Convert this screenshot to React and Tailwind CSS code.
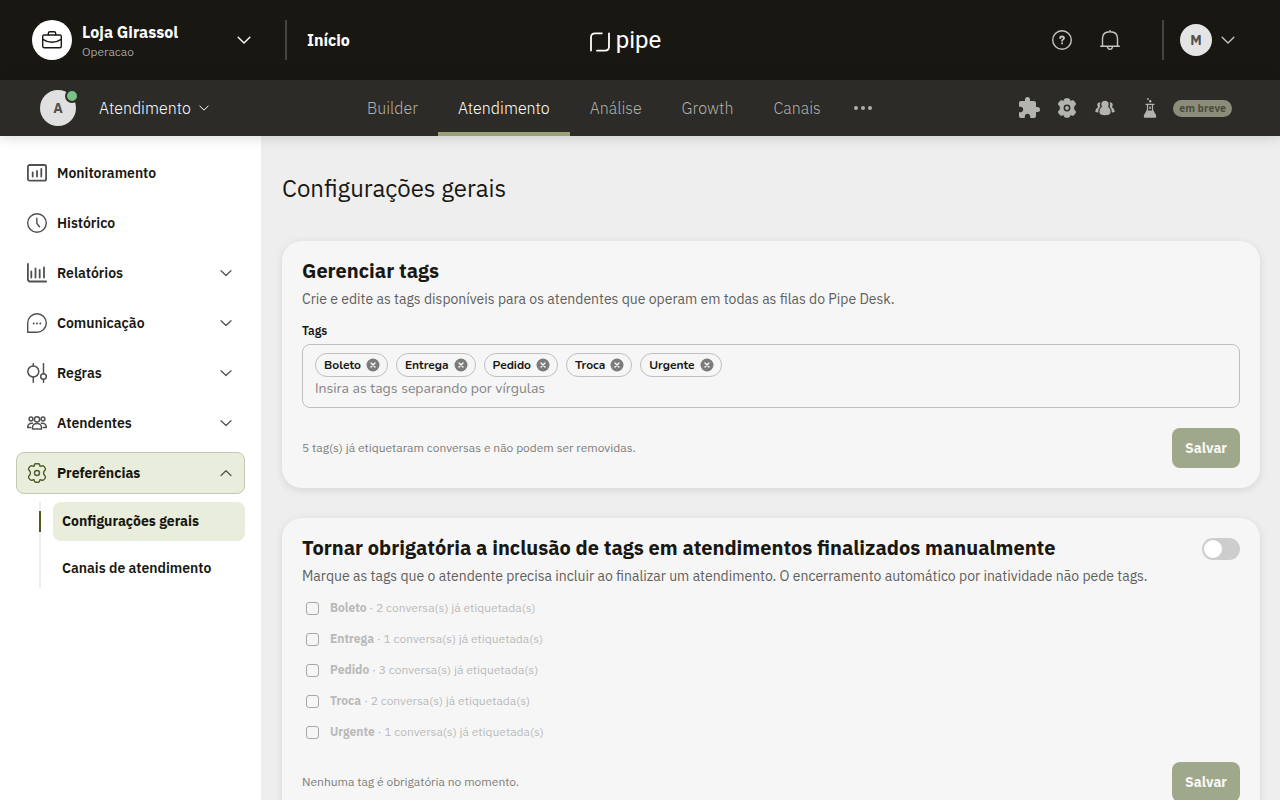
import { useState } from 'react'
import { MdExtension } from 'react-icons/md'

const TAGS = [
  { name: 'Boleto', used: 2 },
  { name: 'Entrega', used: 1 },
  { name: 'Pedido', used: 3 },
  { name: 'Troca', used: 2 },
  { name: 'Urgente', used: 1 },
]

const TABS = ['Builder', 'Atendimento', 'Análise', 'Growth', 'Canais']

const stroke = { fill: 'none', stroke: 'currentColor', strokeLinecap: 'round', strokeLinejoin: 'round' }

function Chevron({ className, up }) {
  return (
    <svg viewBox="0 0 12 12" className={className} {...stroke} strokeWidth="1.2" aria-hidden="true">
      <path d={up ? 'M1 8.5 6 3.7l5 4.8' : 'M1 3.7 6 8.5l5-4.8'} />
    </svg>
  )
}

function Icon({ children, className = 'size-5 shrink-0 text-[#505050]', width = 1.4 }) {
  return (
    <svg viewBox="0 0 20 20" className={className} {...stroke} strokeWidth={width} aria-hidden="true">
      {children}
    </svg>
  )
}

const GEAR =
  'M7.3 2.2Q7.3.8 8.6.8h2.8q1.3 0 1.3 1.4 0 1.3 1.2 1 1.3-.7 2.300-.4 1.200.5 2 2.200.8 1.600-.4 2.400-1.200.8-1.200 2.600t1.200 2.600q1.200.8.4 2.400-.8 1.700-2 2.200-1 .3-2.300-.4-1.200-.3-1.200 1 0 1.400-1.300 1.400H8.600q-1.300 0-1.300-1.400 0-1.300-1.200-1-1.300.7-2.300.4-1.200-.5-2-2.200-.8-1.600.4-2.400 1.200-.8 1.200-2.600T2.200 7.400Q1 6.600 1.800 5q.8-1.700 2-2.200 1-.3 2.300.4 1.200.3 1.200-1Z'

const MENU = [
  {
    label: 'Monitoramento',
    icon: (
      <Icon width={1.8}>
        <rect x=".9" y="2" width="18.200" height="15.700" rx="1.800" />
        <path d="M5.700 9.500v4M10 8v5.500M14.300 6v7.500" />
      </Icon>
    ),
  },
  {
    label: 'Histórico',
    icon: (
      <Icon>
        <circle cx="10" cy="10" r="9.300" />
        <path d="M9.800 5.200v5l2.700 3.500" />
      </Icon>
    ),
  },
  {
    label: 'Relatórios',
    group: true,
    icon: (
      <Icon width={1.8}>
        <path d="M.9.900v15.400q0 2.200 2.200 2.200h16M4.300 8.500v6M8.500 5.500v9M12.700 7v7.500M17 4.500v10" />
      </Icon>
    ),
  },
  {
    label: 'Comunicação',
    group: true,
    icon: (
      <Icon>
        <path d="M.7 19.300V10A9.300 9.300 0 1 1 10 19.300Z" />
        <path d="M6.700 10.500v.1M10 10.500v.1M13.300 10.500v.1" strokeWidth="2" />
      </Icon>
    ),
  },
  {
    label: 'Regras',
    group: true,
    icon: (
      <Icon width={1.5}>
        <circle cx="6.300" cy="8.500" r="5.500" />
        <circle cx="16.500" cy="13.500" r="2.800" />
        <path d="M6.300.7V3M6.300 14v5.300M16.500.7v10M16.500 16.500v2.800" />
      </Icon>
    ),
  },
  {
    label: 'Atendentes',
    group: true,
    icon: (
      <Icon width={1.5}>
        <circle cx="4" cy="6" r="1.900" />
        <circle cx="16" cy="6" r="1.900" />
        <circle cx="10" cy="6.300" r="2.600" />
        <path d="M5.500 16v-1.500a4.500 4 0 0 1 9 0V16ZM5.500 10.300q-4.800-.3-4.800 4.200h3M14.500 10.300q4.800-.3 4.800 4.200h-3" />
      </Icon>
    ),
  },
]

function AppBar() {
  return (
    <header className="flex h-20 shrink-0 items-center bg-[#181712] pr-[45px] pl-8 text-white">
      <div className="flex flex-1 items-center">
        <button className="flex w-[219px] items-center gap-2.5 text-left">
          <span className="flex size-10 shrink-0 items-center justify-center rounded-full bg-white text-[#181712]">
            <Icon className="size-5">
              <rect x=".7" y="5" width="18.600" height="12.700" rx="1.500" />
              <path d="M6.300 4.800V3.500q0-1.700 1.700-1.700h4q1.700 0 1.700 1.700v1.300M.8 9.300q9.200 6 18.400 0" />
            </Icon>
          </span>
          <span className="flex-1 pt-1">
            <span className="block text-base leading-5 font-bold">Loja Girassol</span>
            <span className="block text-xs leading-5 text-[#a3a3a0]">Operacao</span>
          </span>
          <Chevron className="size-3.5" />
        </button>
        <span className="ml-[34px] h-10 w-0.5 bg-[#454540]" />
        <a href="#inicio" className="ml-5 text-base leading-5 font-bold">Início</a>
      </div>

      <div className="mr-4 flex items-center gap-1.5">
        <svg viewBox="0 0 20 20" className="mt-1 size-5" {...stroke} strokeWidth="1.800" aria-hidden="true">
          <path d="M1 18.500V5.500Q1 1.300 5.200 1.300h6.600M19 1.300v13.200q0 4.200-4.200 4.200H7" />
        </svg>
        <span className="font-['Roboto',sans-serif] text-2xl leading-8">pipe</span>
      </div>

      <div className="flex flex-1 items-center justify-end text-[#c4c4c0]">
        <button aria-label="Ajuda">
          <Icon className="size-5">
            <circle cx="10" cy="10" r="9.300" />
            <path d="M8.200 8q0-1.500 1.900-1.500T12 8q0 .9-1 1.500-.9.500-.9 1.200M10.100 13.300v.1" strokeWidth="1.900" />
          </Icon>
        </button>
        <button aria-label="Notificações" className="ml-7">
          <Icon className="size-5">
            <path d="M.7 16.300h18.600M2.500 16.300V8.500q0-6.700 7.500-6.700t7.500 6.700v7.800M10 .6v1M7.500 16.800q.5 2.500 2.500 2.500t2.500-2.500" />
          </Icon>
        </button>
        <span className="ml-[42px] h-10 w-0.5 bg-[#454540]" />
        <button className="ml-4 flex items-center gap-[9px]">
          <span className="flex size-8 items-center justify-center rounded-full bg-[#e4e4e4] text-sm font-bold text-[#505050]">M</span>
          <Chevron className="size-3.5" />
        </button>
      </div>
    </header>
  )
}

function NavBar({ tab, onTab }) {
  return (
    <nav className="z-10 flex h-14 shrink-0 items-stretch bg-[#2c2b27] pr-12 pl-10 text-[#b0b0ab] shadow-[0_2px_12px_rgba(0,0,0,0.14)]">
      <div className="flex w-[307px] items-center">
        <span className="relative flex size-9 items-center justify-center rounded-full bg-[#e0e0e0] text-sm font-bold text-[#505050]">
          A
          <span className="absolute -top-px -right-[3px] size-3.5 rounded-full border-2 border-[#2c2b27] bg-[#78c487]" />
        </span>
        <button className="ml-[23px] flex items-center gap-2 text-base font-light text-white">
          Atendimento
          <Chevron className="size-2.5" />
        </button>
      </div>
      {TABS.map((t) => (
        <button
          key={t}
          onClick={() => onTab(t)}
          className={'border-y-4 border-t-transparent px-5 text-base font-light ' + (t === tab ? 'border-b-[#9aa077] text-white' : 'border-b-transparent')}
        >
          {t}
        </button>
      ))}
      <button aria-label="Mais" className="ml-3">
        <svg viewBox="0 0 20 20" className="size-5" fill="currentColor" aria-hidden="true">
          <circle cx="3" cy="10" r="2" />
          <circle cx="10" cy="10" r="2" />
          <circle cx="17" cy="10" r="2" />
        </svg>
      </button>
      <div className="flex flex-1 items-center justify-end text-[#b4b4ae]">
        <button aria-label="Extensões"><MdExtension className="size-6" /></button>
        <button aria-label="Ajustes" className="ml-4">
          <svg viewBox="0 0 20 20" className="size-5" fill="currentColor" stroke="currentColor" aria-hidden="true">
            <path d={GEAR} />
            <circle cx="10" cy="10" r="2.700" stroke="#2c2b27" strokeWidth="1.500" />
          </svg>
        </button>
        <button aria-label="Equipe" className="ml-[18px]">
          <svg viewBox="0 0 20 20" className="size-5" fill="currentColor" aria-hidden="true">
            <path d="M10 2.800a3.700 3.700 0 0 1 3.700 3.700q0 1.300-.7 2.300 2.600 1.600 2.600 5.200 0 3.200-5.600 3.200T4.400 14q0-3.600 2.600-5.200-.7-1-.7-2.300A3.700 3.700 0 0 1 10 2.800Z" />
            <path d="M5.400 4.300Q2.300 4.500 2.300 7q0 1.100.8 1.900Q.3 10.400.3 13.500q0 .6.700.8l2.100.2q-.2-3.600 2.300-5.700-1-2.200 0-4.500ZM14.600 4.300q3.100.2 3.100 2.700 0 1.100-.8 1.900 2.800 1.500 2.800 4.600 0 .6-.7.800l-2.100.2q.2-3.600-2.300-5.700 1-2.200 0-4.500Z" />
          </svg>
        </button>
        <button className="ml-7 flex items-center gap-4" disabled>
          <svg viewBox="0 0 14 20" className="h-5 w-3.5" aria-hidden="true">
            <path d="M3 6.300h8M4.500 6.300v5.500L1.500 17.500M9.500 6.300v5.500l3 5.700" {...stroke} strokeWidth="1.200" />
            <path d="M4.200 12.500h5.600l3.200 5.200q.8 2-1.300 2H2.300q-2.100 0-1.300-2Z" fill="currentColor" />
            <path d="M6.300 8.500h1.500v2.500H6.300Z" fill="currentColor" />
            <circle cx="5" cy="1" r=".9" fill="currentColor" />
            <circle cx="7.200" cy="3.300" r="1.200" fill="currentColor" />
          </svg>
          <span className="rounded-full bg-[#8b8d7a] px-1.5 font-['Open_Sans',sans-serif] text-[10px] leading-[17px] font-bold text-[#4a4d3a]">em breve</span>
        </button>
      </div>
    </nav>
  )
}

function Sidebar() {
  return (
    <aside className="flex w-[261px] shrink-0 flex-col gap-2 bg-white p-4 text-sm font-semibold text-[#181712]">
      {MENU.map((m) => (
        <a key={m.label} href={'#' + m.label} className="flex h-[42px] shrink-0 items-center gap-2.5 rounded-lg border border-transparent px-2.5">
          {m.icon}
          <span className="flex-1">{m.label}</span>
          {m.group && <Chevron className="mr-0.5 size-3 text-[#505050]" />}
        </a>
      ))}
      <a href="#preferencias" className="flex h-[42px] shrink-0 items-center gap-2.5 rounded-lg border border-[#c3c9b0] bg-[#e9eedc] px-2.5 font-bold">
        <Icon className="size-5 text-[#4d5f23]">
          <path d={GEAR} />
          <circle cx="10" cy="10" r="2.500" />
        </Icon>
        <span className="flex-1">Preferências</span>
        <Chevron up className="mr-0.5 size-3 text-[#505050]" />
      </a>
      <div className="ml-[23px] flex gap-3">
        <div className="w-0.5 bg-[#eee] pt-[9px]">
          <div className="h-[21px] bg-[#4d5a20]" />
        </div>
        <div className="flex flex-1 flex-col gap-2">
          <a href="#gerais" className="flex h-[39px] items-center rounded-lg bg-[#e9eedc] px-[9px] pb-0.5 font-bold">Configurações gerais</a>
          <a href="#canais" className="flex h-[39px] items-center rounded-lg px-[9px] pb-0.5">Canais de atendimento</a>
        </div>
      </div>
    </aside>
  )
}

function Card({ title, text, action, children }) {
  return (
    <section className="rounded-[20px] bg-[#f6f6f6] p-5 shadow-[0_2px_8px_rgba(0,0,0,0.1)]">
      <div className="flex h-5 items-center justify-between">
        <h2 className="text-xl leading-5 font-bold">{title}</h2>
        {action}
      </div>
      <p className="mt-2 text-sm leading-5 text-[#60605c]">{text}</p>
      {children}
    </section>
  )
}

function Footer({ children }) {
  return (
    <div className="flex items-center justify-between">
      <p className="text-xs text-[#7d7d79]">{children}</p>
      <button disabled className="h-10 rounded-lg bg-[#a0a88b] px-[13px] text-sm font-bold text-[#f8f8f4]">Salvar</button>
    </div>
  )
}

export default function App() {
  const [tab, setTab] = useState('Atendimento')
  const [required, setRequired] = useState(false)

  return (
    <div className="flex h-screen flex-col overflow-hidden bg-[#eee] font-['IBM_Plex_Sans','Noto_Sans',sans-serif] text-[#181712]">
      <AppBar />
      <NavBar tab={tab} onTab={setTab} />
      <div className="flex min-h-0 flex-1">
        <Sidebar />
        <main className="min-w-0 flex-1 overflow-y-auto px-5 pt-9 pb-8 pl-[21px] [scrollbar-width:none]">
          <h1 className="text-2xl leading-8">Configurações gerais</h1>

          <div className="mt-[37px] flex flex-col gap-[30px]">
            <Card title="Gerenciar tags" text="Crie e edite as tags disponíveis para os atendentes que operam em todas as filas do Pipe Desk.">
              <label htmlFor="tags" className="mt-3.5 mb-[5px] block text-xs leading-4 font-semibold">Tags</label>
              <div className="rounded-lg border border-[#bfbfbf] px-3 py-2 font-['Nunito','Nunito_Sans','Open_Sans',sans-serif]">
                <div className="flex flex-wrap gap-2">
                  {TAGS.map((t) => (
                    <span key={t.name} className="flex h-6 items-center gap-[5px] rounded-full border border-[#bfbfbf] pr-[7px] pl-2 text-xs font-bold">
                      {t.name}
                      <button aria-label={'Remover ' + t.name}>
                        <svg viewBox="0 0 14 14" className="size-3.5" aria-hidden="true">
                          <circle cx="7" cy="7" r="6.500" fill="#7b7b7b" />
                          <path d="m5 5 4 4m0-4L5 9" stroke="#fff" strokeWidth="1.300" strokeLinecap="round" />
                        </svg>
                      </button>
                    </span>
                  ))}
                </div>
                <input id="tags" placeholder="Insira as tags separando por vírgulas" className="block h-[22px] w-full text-sm outline-none placeholder:text-[#85858a]" />
              </div>
              <div className="mt-5">
                <Footer>5 tag(s) já etiquetaram conversas e não podem ser removidas.</Footer>
              </div>
            </Card>

            <Card
              title="Tornar obrigatória a inclusão de tags em atendimentos finalizados manualmente"
              text="Marque as tags que o atendente precisa incluir ao finalizar um atendimento. O encerramento automático por inatividade não pede tags."
              action={
                <input
                  type="checkbox"
                  role="switch"
                  aria-label="Tornar obrigatória"
                  checked={required}
                  onChange={(e) => setRequired(e.target.checked)}
                  className="mt-0.5 flex h-[22px] w-[38px] appearance-none rounded-full bg-[#cdcdcd] p-0.5 before:size-[18px] before:rounded-full before:bg-white checked:justify-end checked:bg-[#6b7a3a]"
                />
              }
            >
              <div className="mt-[7px]">
                {TAGS.map((t) => (
                  <label key={t.name} className="flex h-[31px] items-center gap-[11px] pl-1 text-xs text-[#bababa]">
                    <input type="checkbox" disabled={!required} className="size-[13px] appearance-none rounded-[3px] border border-[#a8a8a8] checked:bg-[#6b7a3a]" />
                    <span className="pb-0.5"><b>{t.name}</b> · {t.used} conversa(s) já etiquetada(s)</span>
                  </label>
                ))}
              </div>
              <div className="mt-3.5">
                <Footer>Nenhuma tag é obrigatória no momento.</Footer>
              </div>
            </Card>
          </div>
        </main>
      </div>
    </div>
  )
}
